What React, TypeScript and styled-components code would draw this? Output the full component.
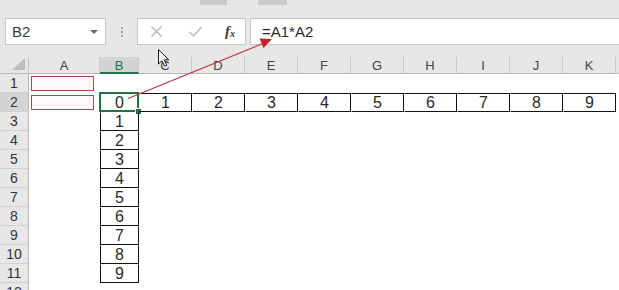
import React from "react";
import styled, { createGlobalStyle } from "styled-components";

const green = "#217346";

const GlobalStyle = createGlobalStyle`
  html, body {
    margin: 0;
    padding: 0;
    background: #fff;
  }
  body {
    font-family: "Liberation Sans", Arial, sans-serif;
  }
`;

const columns = [
  { key: "A", width: 71 },
  { key: "B", width: 39 },
  { key: "C", width: 53 },
  { key: "D", width: 53 },
  { key: "E", width: 53 },
  { key: "F", width: 53 },
  { key: "G", width: 53 },
  { key: "H", width: 53 },
  { key: "I", width: 53 },
  { key: "J", width: 53 },
  { key: "K", width: 53 },
];

const rowCount = 12;

const App = () => (
  <Screen>
    <GlobalStyle />
    <TopBar>
      <Tabs>
        <TabStub $width={27} />
        <TabStub $width={29} />
      </Tabs>
      <FormulaRow>
        <NameBox>
          <span>B2</span>
          <DropArrow />
        </NameBox>
        <Grip>
          <i />
          <i />
          <i />
        </Grip>
        <FxBox>
          <FxButton $color="#b4b4b4">
            <svg width="13" height="13" viewBox="0 0 13 13">
              <path d="M1.5 1.5 L11.5 11.5 M11.5 1.5 L1.5 11.5" stroke="currentColor" strokeWidth="1.3" fill="none" />
            </svg>
          </FxButton>
          <FxButton $color="#b8b8b8">
            <svg width="15" height="13" viewBox="0 0 15 13">
              <path d="M1.5 7 L5.5 11 L13.5 2" stroke="currentColor" strokeWidth="1.4" fill="none" />
            </svg>
          </FxButton>
          <FxLabel>
            f<sub>x</sub>
          </FxLabel>
        </FxBox>
        <FormulaInput>=A1*A2</FormulaInput>
      </FormulaRow>
    </TopBar>

    <Sheet>
      <Corner>
        <svg width="13" height="12" viewBox="0 0 13 12">
          <polygon points="13,0 13,12 0,12" fill="#bdbdbd" />
        </svg>
      </Corner>
      {columns.map((c) => (
        <ColHeader key={c.key} $active={c.key === "B"}>
          {c.key}
        </ColHeader>
      ))}
      <ColHeader $last />

      {Array.from({ length: rowCount }, (_, i) => {
        const row = i + 1;
        return (
          <React.Fragment key={row}>
            <RowHeader $active={row === 2}>{row}</RowHeader>
            {columns.map((c, ci) => {
              if (c.key === "A") {
                return <Cell key={c.key}>{row <= 2 && <MarkBox />}</Cell>;
              }
              if (c.key === "B" && row === 2) {
                return (
                  <Cell key={c.key}>
                    0
                    <Selection>
                      <FillHandle />
                    </Selection>
                  </Cell>
                );
              }
              if (c.key === "B" && row >= 3 && row <= 11) {
                return (
                  <Cell key={c.key} $left $right $bottom>
                    {row - 2}
                  </Cell>
                );
              }
              if (row === 2 && ci >= 2) {
                return (
                  <Cell key={c.key} $top $right $bottom>
                    {ci - 1}
                  </Cell>
                );
              }
              return <Cell key={c.key} />;
            })}
            <Cell />
          </React.Fragment>
        );
      })}
    </Sheet>

    <Annotation width="619" height="290" viewBox="0 0 619 290">
      <line x1="128" y1="98.5" x2="263" y2="43.5" stroke="#c0383f" strokeWidth="1.3" />
      <polygon points="272,39 259.5,38.5 263.5,48" fill="#c8202a" />
      <g transform="translate(158 49)">
        <path
          d="M0.5 0.5 L0.5 15 L4 11.7 L6.6 17.3 L8.8 16.3 L6.3 10.8 L10.8 10.8 Z"
          fill="#f4f4f4"
          stroke="#1a1a1a"
          strokeWidth="1"
          strokeLinejoin="round"
        />
      </g>
    </Annotation>
  </Screen>
);

const Screen = styled.div`
  position: relative;
  width: 619px;
  height: 290px;
  overflow: hidden;
  background: #fff;
`;

const TopBar = styled.div`
  height: 57px;
  background: #e7e7e7;
  display: flex;
  flex-direction: column;
`;

const Tabs = styled.div`
  display: flex;
  gap: 31px;
  padding-left: 200px;
  height: 5px;
`;

const TabStub = styled.div<{ $width: number }>`
  width: ${(p) => p.$width}px;
  height: 5px;
  background: #c9c9c9;
`;

const FormulaRow = styled.div`
  display: flex;
  align-items: stretch;
  height: 27px;
  margin-top: 13px;
  padding-left: 5px;
`;

const NameBox = styled.div`
  box-sizing: border-box;
  width: 101px;
  background: #fff;
  border: 1px solid #c8c8c8;
  display: flex;
  align-items: center;
  justify-content: space-between;
  padding: 0 7px 0 6px;
  font-size: 15px;
  color: #3a3a3a;
`;

const DropArrow = styled.span`
  width: 0;
  height: 0;
  border-left: 4px solid transparent;
  border-right: 4px solid transparent;
  border-top: 4px solid #6b6b6b;
`;

const Grip = styled.div`
  width: 31px;
  display: flex;
  flex-direction: column;
  align-items: center;
  justify-content: center;
  gap: 2px;
  & > i {
    display: block;
    width: 2px;
    height: 2px;
    background: #a9a9a9;
  }
`;

const FxBox = styled.div`
  box-sizing: border-box;
  width: 109px;
  background: #fff;
  border: 1px solid #c8c8c8;
  display: flex;
  align-items: center;
  padding: 0 10px 0 12px;
`;

const FxButton = styled.span<{ $color: string }>`
  width: 38px;
  display: flex;
  align-items: center;
  justify-content: flex-start;
  color: ${(p) => p.$color};
`;

const FxLabel = styled.span`
  margin-left: auto;
  font-family: "Liberation Serif", "Times New Roman", serif;
  font-style: italic;
  font-weight: bold;
  font-size: 15px;
  color: #3b3b3b;
  line-height: 1;
  & > sub {
    font-size: 10px;
    vertical-align: baseline;
    position: relative;
    top: 1px;
  }
`;

const FormulaInput = styled.div`
  box-sizing: border-box;
  flex: 1;
  margin-left: 4px;
  background: #fff;
  border-top: 1px solid #c8c8c8;
  border-bottom: 1px solid #c8c8c8;
  border-left: 1px solid #c8c8c8;
  display: flex;
  align-items: center;
  padding-left: 11px;
  font-size: 15px;
  color: #2a2a2a;
`;

const Sheet = styled.div`
  display: grid;
  grid-template-columns: 29px ${columns.map((c) => `${c.width}px`).join(" ")} 1fr;
  grid-template-rows: 17px repeat(${rowCount}, 19px);
`;

const Corner = styled.div`
  box-sizing: border-box;
  background: #e7e7e7;
  border-right: 1px solid #c4c4c4;
  border-bottom: 1px solid #b8b8b8;
  display: flex;
  align-items: flex-end;
  justify-content: flex-end;
  padding: 0 3px 3px 0;
`;

const ColHeader = styled.div<{ $active?: boolean; $last?: boolean }>`
  box-sizing: border-box;
  background: ${(p) => (p.$active ? "#d4d4d4" : "#e7e7e7")};
  border-right: 1px solid ${(p) => (p.$last ? "transparent" : "#c8c8c8")};
  border-bottom: ${(p) => (p.$active ? `2px solid ${green}` : "1px solid #b8b8b8")};
  color: ${(p) => (p.$active ? green : "#444")};
  font-size: 13px;
  display: flex;
  align-items: center;
  justify-content: center;
  padding-top: ${(p) => (p.$active ? "1px" : "0")};
`;

const RowHeader = styled.div<{ $active?: boolean }>`
  box-sizing: border-box;
  background: ${(p) => (p.$active ? "#d4d4d4" : "#e7e7e7")};
  border-right: 1px solid #b8b8b8;
  border-bottom: 1px solid #d2d2d2;
  color: ${(p) => (p.$active ? "#2c4a36" : "#333")};
  font-size: 14px;
  display: flex;
  align-items: center;
  justify-content: center;
`;

type CellProps = {
  $top?: boolean;
  $left?: boolean;
  $right?: boolean;
  $bottom?: boolean;
};

const Cell = styled.div<CellProps>`
  position: relative;
  box-sizing: border-box;
  display: flex;
  align-items: center;
  justify-content: center;
  font-size: 16px;
  color: #2a2a2a;
  border-top: 1px solid ${(p) => (p.$top ? "#111" : "transparent")};
  border-left: 1px solid ${(p) => (p.$left ? "#111" : "transparent")};
  border-right: 1px solid ${(p) => (p.$right ? "#111" : "transparent")};
  border-bottom: 1px solid ${(p) => (p.$bottom ? "#111" : "transparent")};
  padding-top: 1px;
`;

const MarkBox = styled.div`
  position: absolute;
  left: 1px;
  right: 5px;
  top: 1px;
  bottom: 1px;
  border: 1px solid #a8454b;
  background: #fffafa;
`;

const Selection = styled.div`
  position: absolute;
  top: -2px;
  left: -2px;
  right: -1px;
  bottom: -1px;
  border: 2px solid ${green};
  pointer-events: none;
`;

const FillHandle = styled.div`
  position: absolute;
  right: -5px;
  bottom: -5px;
  width: 5px;
  height: 5px;
  background: ${green};
  border: 1px solid #fff;
`;

const Annotation = styled.svg`
  position: absolute;
  left: 0;
  top: 0;
  pointer-events: none;
`;

export default App;
